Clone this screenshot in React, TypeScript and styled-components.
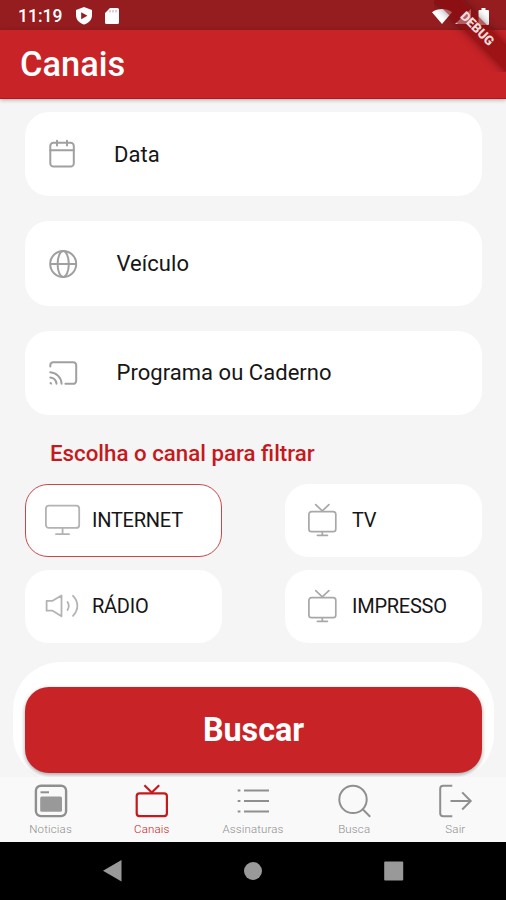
import React from 'react';
import styled, { createGlobalStyle } from 'styled-components';

const GlobalStyle = createGlobalStyle`
  * { box-sizing: border-box; }
  body { margin: 0; font-family: Roboto, sans-serif; background: #f5f5f5; }
  svg { display: block; flex: none; overflow: visible; }
`;

const Phone = styled.div`
  width: 506px;
  height: 900px;
  display: flex;
  flex-direction: column;
  position: relative;
  overflow: hidden;
  background: #f5f5f5;
`;

const StatusBar = styled.header`
  height: 30px;
  flex: none;
  display: flex;
  align-items: center;
  justify-content: space-between;
  padding: 2px 16px 0 18px;
  background: #951c1f;
  color: #fff;
`;

const StatusGroup = styled.div<{ $gap: number }>`
  display: flex;
  align-items: center;
  gap: ${(p) => p.$gap}px;
`;

const Clock = styled.span`
  font-size: 17.5px;
  font-weight: 500;
  line-height: 20px;
  width: 45px;
  white-space: nowrap;
`;

const AppBar = styled.div`
  height: 69px;
  flex: none;
  display: flex;
  align-items: center;
  padding-left: 20px;
  background: #c82327;
  border-bottom: 1px solid #bd1115;
  box-shadow: 0 1px 4px rgba(0, 0, 0, 0.3);
`;

const Title = styled.h1`
  margin: 0;
  color: #fff;
  font-size: 34.4px;
  font-weight: 500;
  line-height: 40px;
`;

const DebugCorner = styled.div`
  position: absolute;
  top: 0;
  right: 0;
  width: 72px;
  height: 72px;
  overflow: hidden;
`;

const DebugRibbon = styled.div`
  position: absolute;
  top: 19px;
  left: -27px;
  width: 140px;
  height: 20px;
  transform: rotate(45deg);
  background: rgba(135, 10, 13, 0.66);
  box-shadow: 0 0 8px rgba(0, 0, 0, 0.4);
  color: #f3dada;
  font-size: 13px;
  font-weight: 900;
  line-height: 20px;
  text-align: center;
`;

const Form = styled.main`
  flex: 1;
  min-height: 0;
  display: flex;
  flex-direction: column;
  padding-top: 13px;
  overflow: hidden;
`;

const Fields = styled.div`
  display: flex;
  flex-direction: column;
  gap: 25px;
  margin: 0 24px 0 25px;
`;

const Field = styled.div`
  height: 84.4px;
  display: flex;
  align-items: center;
  padding-left: 24px;
  border-radius: 24px;
  background: #fff;
`;

const FieldLabel = styled.span<{ $indent: number }>`
  margin-left: ${(p) => p.$indent}px;
  padding-top: 1px;
  color: #161616;
  font-size: 22px;
  line-height: 28px;
  letter-spacing: 0.04px;
`;

const Heading = styled.h2`
  margin: 23.4px 0 0 50px;
  height: 28px;
  color: #c5191d;
  font-size: 22.3px;
  font-weight: 500;
  line-height: 28px;
`;

const Channels = styled.div`
  display: grid;
  grid-template-columns: 197px 197px;
  justify-content: space-between;
  row-gap: 13px;
  margin: 17.4px 24px 0 25px;
`;

const Channel = styled.div<{ $selected?: boolean }>`
  height: 73px;
  display: flex;
  align-items: center;
  gap: 12px;
  padding-left: 19px;
  border: 1px solid ${(p) => (p.$selected ? '#c9474a' : '#fff')};
  border-radius: 23px;
  background: #fff;
  color: #161616;
  font-size: 20px;
  letter-spacing: -0.25px;
`;

const IconSlot = styled.span`
  width: 35px;
  display: flex;
  justify-content: center;
`;

const ActionPanel = styled.div`
  height: 120px;
  flex: none;
  margin: 19px 12px 0 13px;
  padding: 25px 12px 0;
  border-radius: 48px;
  background: #fff;
`;

const SearchButton = styled.button`
  display: block;
  width: 100%;
  height: 86px;
  border: 0;
  border-radius: 24px;
  background: #c82327;
  box-shadow: 0 2px 4px rgba(0, 0, 0, 0.35);
  color: #fff;
  font-family: Roboto, sans-serif;
  font-size: 32.3px;
  font-weight: 700;
`;

const TabBar = styled.nav`
  height: 64.5px;
  flex: none;
  display: grid;
  grid-template-columns: repeat(5, 1fr);
  background: #f9f9f9;
`;

const Tab = styled.div<{ $active?: boolean }>`
  display: flex;
  flex-direction: column;
  align-items: center;
  padding-top: 7px;
  color: ${(p) => (p.$active ? '#c5191d' : '#8f8f8f')};
`;

const TabLabel = styled.span`
  margin-top: 4px;
  font-size: 11.5px;
  font-weight: 300;
  line-height: 15px;
  letter-spacing: 0.15px;
`;

const SystemBar = styled.footer`
  height: 58.5px;
  flex: none;
  display: flex;
  justify-content: space-between;
  align-items: center;
  padding: 0 102px;
  background: #000;
`;

const CalendarIcon = () => (
  <svg width="28" height="28" viewBox="0 0 28 28" fill="none" stroke="#a0a0a0" strokeWidth="2" strokeLinecap="round">
    <rect x="1.3" y="2.8" width="23.5" height="23.8" rx="3.2" />
    <path d="M1.3 10.3h23.5M8 .7v4.8M18 .7v4.8" />
  </svg>
);

const GlobeIcon = () => (
  <svg width="28" height="28" viewBox="0 0 28 28" fill="none" stroke="#a0a0a0" strokeWidth="2">
    <circle cx="14.2" cy="14" r="13" />
    <ellipse cx="14.2" cy="14" rx="5.6" ry="13" />
    <path d="M1.2 14h26" />
  </svg>
);

const CastIcon = () => (
  <svg width="28" height="28" viewBox="0 0 28 28" fill="none" stroke="#a0a0a0" strokeWidth="2" strokeLinecap="round">
    <path d="M1.3 7.5V6.2a3 3 0 0 1 3-3h19.9a3 3 0 0 1 3 3v15.6a3 3 0 0 1-3 3h-7.800M1.3 13.3c6.2.5 11 5.3 11.3 11.4M1.3 18.5c3.5.4 5.8 2.7 6.2 6.2M1.5 24.1l.6.5" />
  </svg>
);

const MonitorIcon = () => (
  <svg width="35" height="32" viewBox="0 0 35 32" fill="none" stroke="#b3b3b3" strokeWidth="1.8" strokeLinecap="round">
    <rect x=".9" y="1.6" width="33.3" height="22.3" rx="3" />
    <path d="M17.6 24v6M11 30.2h13" />
  </svg>
);

const SpeakerIcon = () => (
  <svg width="35" height="32" viewBox="0 0 35 32" fill="none" stroke="#b3b3b3" strokeWidth="1.8" strokeLinecap="round" strokeLinejoin="round">
    <path d="M1.6 10.8h6L16.5 5.5v20.8l-8.9-5.6h-6zM22.5 12c1.7 2.7 1.7 5.4 0 8M28 5.8c5.8 6 5.8 13.7 0 20.1" />
  </svg>
);

const TelevisionIcon = () => (
  <svg width="29" height="34" viewBox="0 0 29 34" fill="none" stroke="#a8a8a8" strokeWidth="1.7" strokeLinecap="round">
    <rect x=".9" y="8.6" width="26.9" height="20" rx="2.7" />
    <path d="m7.7 1.7 6.6 6.2 6.6-6.2M14.3 28.9v3.2M9.4 32.3h10" />
  </svg>
);

const NewsIcon = () => (
  <svg width="34" height="34" viewBox="0 0 34 34" fill="none" stroke="currentColor" strokeWidth="2.4">
    <rect x="1.9" y="1.7" width="30.2" height="30.4" rx="5" />
    <rect x="6.2" y="12.5" width="21.8" height="15.2" rx="1.5" fill="#999" stroke="none" />
    <path d="M6.5 8.3h8.5" strokeWidth="2" />
  </svg>
);

const TabTvIcon = () => (
  <svg width="34" height="34" viewBox="0 0 34 34" fill="none" stroke="currentColor" strokeWidth="2.2">
    <rect x="1.7" y="9.3" width="30.2" height="22.8" rx="2.8" />
    <path d="m9.4 1.2 7.4 7.3L24.2 1.2" />
  </svg>
);

const ListIcon = () => (
  <svg width="34" height="34" viewBox="0 0 34 34" fill="none" stroke="currentColor" strokeWidth="2">
    <path d="M1.7 6.4h2.7M8 6.4h25M1.7 17h2.7M8 17h25M1.7 27.6h2.7M8 27.6h25" />
  </svg>
);

const SearchIcon = () => (
  <svg width="34" height="34" viewBox="0 0 34 34" fill="none" stroke="currentColor" strokeWidth="2">
    <circle cx="16" cy="15.4" r="13.7" />
    <path d="m25.7 25.2 7.5 7.5" />
  </svg>
);

const ExitIcon = () => (
  <svg width="34" height="34" viewBox="0 0 34 34" fill="none" stroke="currentColor" strokeWidth="2">
    <path d="M14.3 1.8H5.2a3 3 0 0 0-3 3v24.4a3 3 0 0 0 3 3H14.3M12.5 17h20.2M24.2 8.4l8.5 8.6-8.5 8.5" />
  </svg>
);

const tabs = [
  { label: 'Noticias', Icon: NewsIcon },
  { label: 'Canais', Icon: TabTvIcon, active: true },
  { label: 'Assinaturas', Icon: ListIcon },
  { label: 'Busca', Icon: SearchIcon },
  { label: 'Sair', Icon: ExitIcon },
];

const channels = [
  { label: 'INTERNET', Icon: MonitorIcon, selected: true },
  { label: 'TV', Icon: TelevisionIcon },
  { label: 'RÁDIO', Icon: SpeakerIcon },
  { label: 'IMPRESSO', Icon: TelevisionIcon },
];

export default function App() {
  return (
    <Phone>
      <GlobalStyle />
      <StatusBar>
        <StatusGroup $gap={13}>
          <Clock>11:19</Clock>
          <svg width="16" height="18" viewBox="0 0 16 18">
            <path d="M8 0 16 3v5.3c0 4.3-3 7.8-8 9.3-5-1.5-8-5-8-9.3V3z" fill="#fff" />
            <path d="m5.2 5.2 6.2 3.5-6.2 3.5z" fill="#951c1f" />
          </svg>
          <svg width="14" height="16" viewBox="0 0 14 16">
            <path d="M5 0h7.5A1.5 1.5 0 0 1 14 1.5v13a1.5 1.5 0 0 1-1.5 1.5h-11A1.5 1.5 0 0 1 0 14.5V5z" fill="#fff" />
            <path d="M5 2v2.5M8 2v2.5M11 2v2.5" stroke="#cf9a9b" strokeWidth="1" />
          </svg>
        </StatusGroup>
        <StatusGroup $gap={3}>
          <svg width="20" height="15" viewBox="0 0 20 15">
            <path d="M0 3.3C5.7-1 14.3-1 20 3.3L10 15z" fill="#fff" />
          </svg>
          <svg width="16" height="15" viewBox="0 0 16 15">
            <path d="M16 0v15H0z" fill="#fff" />
          </svg>
          <svg width="16" height="17" viewBox="0 0 16 17">
            <path d="M7.5 0h4v2H14q1 0 1 1v13q0 1-1 1H5.5q-1 0-1-1V3q0-1 1-1h2z" fill="#fff" />
          </svg>
        </StatusGroup>
      </StatusBar>
      <AppBar>
        <Title>Canais</Title>
      </AppBar>
      <Form>
        <Fields>
          <Field>
            <CalendarIcon />
            <FieldLabel $indent={37}>Data</FieldLabel>
          </Field>
          <Field>
            <GlobeIcon />
            <FieldLabel $indent={39.5}>Veículo</FieldLabel>
          </Field>
          <Field>
            <CastIcon />
            <FieldLabel $indent={39.5}>Programa ou Caderno</FieldLabel>
          </Field>
        </Fields>
        <Heading>Escolha o canal para filtrar</Heading>
        <Channels>
          {channels.map(({ label, Icon, selected }) => (
            <Channel key={label} $selected={selected}>
              <IconSlot>
                <Icon />
              </IconSlot>
              <span>{label}</span>
            </Channel>
          ))}
        </Channels>
        <ActionPanel>
          <SearchButton>Buscar</SearchButton>
        </ActionPanel>
      </Form>
      <TabBar>
        {tabs.map(({ label, Icon, active }) => (
          <Tab key={label} $active={active}>
            <Icon />
            <TabLabel>{label}</TabLabel>
          </Tab>
        ))}
      </TabBar>
      <SystemBar>
        <svg width="20" height="22" viewBox="0 0 20 22">
          <path d="M19.5 0v21.5L1 10.7z" fill="#999" />
        </svg>
        <svg width="18" height="18" viewBox="0 0 18 18">
          <circle cx="9" cy="9" r="9" fill="#999" />
        </svg>
        <svg width="20" height="20" viewBox="0 0 20 20">
          <rect x=".2" y=".5" width="19" height="19" rx="1" fill="#999" />
        </svg>
      </SystemBar>
      <DebugCorner>
        <DebugRibbon>DEBUG</DebugRibbon>
      </DebugCorner>
    </Phone>
  );
}
